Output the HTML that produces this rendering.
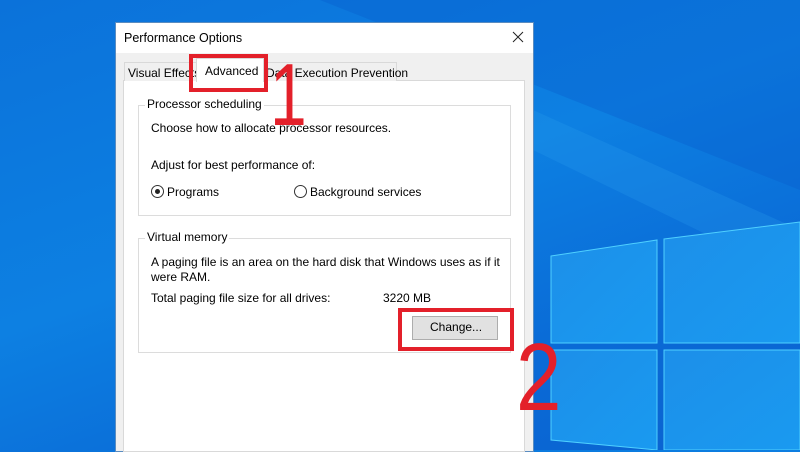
<!DOCTYPE html>
<html><head><style>
*{margin:0;padding:0;box-sizing:border-box}
body{width:800px;height:450px;overflow:hidden;position:relative;font-family:"Liberation Sans",sans-serif;font-size:12px;color:#000;
background:linear-gradient(160deg,#0b72da 0%,#0d80e2 45%,#0a6ad6 75%,#0a62d0 100%)}
.a{position:absolute}
.t{position:absolute;white-space:nowrap}
.grp{position:absolute;border:1px solid #dcdcdc}
.lbl{position:absolute;background:#fff;padding:0 2px;top:-9px;left:6px;font-size:12px}
.red{position:absolute;border:4px solid #e3202a}
.num{position:absolute;color:#e3202a;font-family:"Liberation Sans",sans-serif;line-height:1;transform-origin:0 0}
.radio{position:absolute;width:13px;height:13px;border:1px solid #333;border-radius:50%;background:#fff}
</style></head><body>
<svg class="a" style="left:0;top:0" width="800" height="450">
<defs><linearGradient id="g" x1="0" y1="0" x2="1" y2="1"><stop offset="0" stop-color="#1c8fe9"/><stop offset="1" stop-color="#1a9af0"/></linearGradient></defs>
<polygon points="320,0 800,190 800,0" fill="#0a5ccc" opacity=".35"/>
<polygon points="533,150 800,280 800,230 533,110" fill="#2aa0f0" opacity=".25"/>
<polygon points="551,256 657,240 657,343 551,343" fill="url(#g)" stroke="#4fd0ff" stroke-width="1"/>
<polygon points="664,239 800,222 800,343 664,343" fill="url(#g)" stroke="#4fd0ff" stroke-width="1"/>
<polygon points="551,350 657,350 657,450 551,440" fill="url(#g)" stroke="#4fd0ff" stroke-width="1"/>
<polygon points="664,350 800,350 800,450 664,450" fill="url(#g)" stroke="#4fd0ff" stroke-width="1"/>
</svg>
<div class="a" style="left:115px;top:22px;width:419px;height:430px;background:#f0f0f0;border:1px solid #5a8cc0"></div>
<div class="a" style="left:116px;top:23px;width:417px;height:30px;background:#fff"></div>
<div class="t" style="left:124px;top:31px;font-size:12.5px">Performance Options</div>
<svg class="a" style="left:512px;top:31px" width="12" height="12"><path d="M1 1L11 11M11 1L1 11" stroke="#222" stroke-width="1"/></svg>
<div class="a" style="left:123px;top:80px;width:402px;height:372px;background:#fff;border:1px solid #d9d9d9"></div>
<div class="a" style="left:124px;top:62px;width:73px;height:19px;background:#f0f0f0;border:1px solid #d9d9d9;border-bottom:none"></div>
<div class="t" style="left:128px;top:66px">Visual Effects</div>
<div class="a" style="left:263px;top:62px;width:134px;height:19px;background:#f0f0f0;border:1px solid #d9d9d9;border-bottom:none"></div>
<div class="t" style="left:266px;top:66px">Data Execution Prevention</div>
<div class="a" style="left:196px;top:58px;width:68px;height:24px;background:#fff;border:1px solid #d9d9d9;border-bottom:none"></div>
<div class="t" style="left:205px;top:64px">Advanced</div>
<div class="grp" style="left:138px;top:105px;width:373px;height:111px"><span class="lbl">Processor scheduling</span></div>
<div class="t" style="left:151px;top:121px">Choose how to allocate processor resources.</div>
<div class="t" style="left:151px;top:158px">Adjust for best performance of:</div>
<div class="radio" style="left:151px;top:185px"><div class="a" style="left:3px;top:3px;width:5px;height:5px;border-radius:50%;background:#222"></div></div>
<div class="t" style="left:167px;top:185px">Programs</div>
<div class="radio" style="left:294px;top:185px"></div>
<div class="t" style="left:310px;top:185px">Background services</div>
<div class="grp" style="left:138px;top:238px;width:373px;height:115px"><span class="lbl">Virtual memory</span></div>
<div class="t" style="left:151px;top:255px">A paging file is an area on the hard disk that Windows uses as if it</div>
<div class="t" style="left:151px;top:270px">were RAM.</div>
<div class="t" style="left:151px;top:291px">Total paging file size for all drives:</div>
<div class="t" style="left:383px;top:291px">3220 MB</div>
<div class="a" style="left:412px;top:316px;width:86px;height:24px;background:#e1e1e1;border:1px solid #adadad"></div>
<div class="t" style="left:430px;top:320px">Change...</div>
<div class="red" style="left:189px;top:54px;width:79px;height:38px"></div>
<div class="red" style="left:398px;top:308px;width:116px;height:43px"></div>
<div class="num" style="left:270px;top:51px;font-size:88px;transform:scaleX(.75)">1</div>
<div class="num" style="left:516px;top:330px;font-size:96px;transform:scaleX(.85)">2</div>
</body></html>
